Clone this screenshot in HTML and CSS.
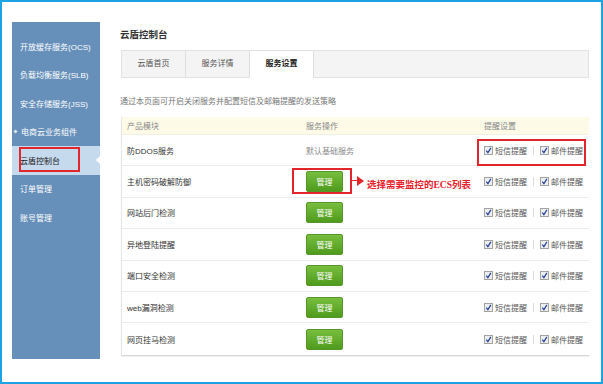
FILE: index.html
```html
<!DOCTYPE html>
<html lang="zh-CN">
<head>
<meta charset="utf-8">
<title>云盾控制台</title>
<link rel="stylesheet" href="styles.css">
</head>
<body>
<div class="frame">
  <aside class="side">
    <div class="side-list">
      <div class="side-item">开放缓存服务(OCS)</div>
      <div class="side-item">负载均衡服务(SLB)</div>
      <div class="side-item">安全存储服务(JSS)</div>
      <div class="side-item"><span class="bullet"></span>电商云业务组件</div>
      <div class="side-item active">云盾控制台<span class="mark side-mark"></span><span class="pointer"></span></div>
      <div class="side-item">订单管理</div>
      <div class="side-item">账号管理</div>
    </div>
  </aside>
  <main class="main">
    <div class="title">云盾控制台</div>
    <div class="tabs">
      <div class="tab">云盾首页</div>
      <div class="tab">服务详情</div>
      <div class="tab active">服务设置</div>
    </div>
    <p class="desc">通过本页面可开启关闭服务并配置短信及邮箱提醒的发送策略</p>
    <div class="table">
      <div class="row head">
        <div class="cell">产品模块</div>
        <div class="cell">服务操作</div>
        <div class="cell">提醒设置</div>
      </div>
      <div class="row">
        <div class="cell name">防DDOS服务</div>
        <div class="cell muted">默认基础服务</div>
        <div class="cell checks">
          <span class="cb"><svg viewBox="0 0 9 9" width="9" height="9"><rect x="0.5" y="0.5" width="8" height="8" fill="#eceef2" stroke="#a3a3a3"/><path d="M2.3 4.6 L3.9 6.6 L6.9 1.9" fill="none" stroke="#27409a" stroke-width="1.2"/></svg></span><span>短信提醒</span><span class="sep"></span><span class="cb"><svg viewBox="0 0 9 9" width="9" height="9"><rect x="0.5" y="0.5" width="8" height="8" fill="#eceef2" stroke="#a3a3a3"/><path d="M2.3 4.6 L3.9 6.6 L6.9 1.9" fill="none" stroke="#27409a" stroke-width="1.2"/></svg></span><span>邮件提醒</span>
          <span class="mark check-mark"></span>
        </div>
      </div>
      <div class="row">
        <div class="cell name">主机密码破解防御</div>
        <div class="cell op">
          <span class="btn">管理</span>
          <span class="mark btn-mark"></span>
          <span class="arrow-line"></span><span class="arrow-head"></span>
          <span class="note">选择需要监控的ECS列表</span>
        </div>
        <div class="cell checks">
          <span class="cb"><svg viewBox="0 0 9 9" width="9" height="9"><rect x="0.5" y="0.5" width="8" height="8" fill="#eceef2" stroke="#a3a3a3"/><path d="M2.3 4.6 L3.9 6.6 L6.9 1.9" fill="none" stroke="#27409a" stroke-width="1.2"/></svg></span><span>短信提醒</span><span class="sep"></span><span class="cb"><svg viewBox="0 0 9 9" width="9" height="9"><rect x="0.5" y="0.5" width="8" height="8" fill="#eceef2" stroke="#a3a3a3"/><path d="M2.3 4.6 L3.9 6.6 L6.9 1.9" fill="none" stroke="#27409a" stroke-width="1.2"/></svg></span><span>邮件提醒</span>
        </div>
      </div>
      <div class="row">
        <div class="cell name">网站后门检测</div>
        <div class="cell op"><span class="btn">管理</span></div>
        <div class="cell checks">
          <span class="cb"><svg viewBox="0 0 9 9" width="9" height="9"><rect x="0.5" y="0.5" width="8" height="8" fill="#eceef2" stroke="#a3a3a3"/><path d="M2.3 4.6 L3.9 6.6 L6.9 1.9" fill="none" stroke="#27409a" stroke-width="1.2"/></svg></span><span>短信提醒</span><span class="sep"></span><span class="cb"><svg viewBox="0 0 9 9" width="9" height="9"><rect x="0.5" y="0.5" width="8" height="8" fill="#eceef2" stroke="#a3a3a3"/><path d="M2.3 4.6 L3.9 6.6 L6.9 1.9" fill="none" stroke="#27409a" stroke-width="1.2"/></svg></span><span>邮件提醒</span>
        </div>
      </div>
      <div class="row">
        <div class="cell name">异地登陆提醒</div>
        <div class="cell op"><span class="btn">管理</span></div>
        <div class="cell checks">
          <span class="cb"><svg viewBox="0 0 9 9" width="9" height="9"><rect x="0.5" y="0.5" width="8" height="8" fill="#eceef2" stroke="#a3a3a3"/><path d="M2.3 4.6 L3.9 6.6 L6.9 1.9" fill="none" stroke="#27409a" stroke-width="1.2"/></svg></span><span>短信提醒</span><span class="sep"></span><span class="cb"><svg viewBox="0 0 9 9" width="9" height="9"><rect x="0.5" y="0.5" width="8" height="8" fill="#eceef2" stroke="#a3a3a3"/><path d="M2.3 4.6 L3.9 6.6 L6.9 1.9" fill="none" stroke="#27409a" stroke-width="1.2"/></svg></span><span>邮件提醒</span>
        </div>
      </div>
      <div class="row">
        <div class="cell name">端口安全检测</div>
        <div class="cell op"><span class="btn">管理</span></div>
        <div class="cell checks">
          <span class="cb"><svg viewBox="0 0 9 9" width="9" height="9"><rect x="0.5" y="0.5" width="8" height="8" fill="#eceef2" stroke="#a3a3a3"/><path d="M2.3 4.6 L3.9 6.6 L6.9 1.9" fill="none" stroke="#27409a" stroke-width="1.2"/></svg></span><span>短信提醒</span><span class="sep"></span><span class="cb"><svg viewBox="0 0 9 9" width="9" height="9"><rect x="0.5" y="0.5" width="8" height="8" fill="#eceef2" stroke="#a3a3a3"/><path d="M2.3 4.6 L3.9 6.6 L6.9 1.9" fill="none" stroke="#27409a" stroke-width="1.2"/></svg></span><span>邮件提醒</span>
        </div>
      </div>
      <div class="row">
        <div class="cell name">web漏洞检测</div>
        <div class="cell op"><span class="btn">管理</span></div>
        <div class="cell checks">
          <span class="cb"><svg viewBox="0 0 9 9" width="9" height="9"><rect x="0.5" y="0.5" width="8" height="8" fill="#eceef2" stroke="#a3a3a3"/><path d="M2.3 4.6 L3.9 6.6 L6.9 1.9" fill="none" stroke="#27409a" stroke-width="1.2"/></svg></span><span>短信提醒</span><span class="sep"></span><span class="cb"><svg viewBox="0 0 9 9" width="9" height="9"><rect x="0.5" y="0.5" width="8" height="8" fill="#eceef2" stroke="#a3a3a3"/><path d="M2.3 4.6 L3.9 6.6 L6.9 1.9" fill="none" stroke="#27409a" stroke-width="1.2"/></svg></span><span>邮件提醒</span>
        </div>
      </div>
      <div class="row">
        <div class="cell name">网页挂马检测</div>
        <div class="cell op"><span class="btn">管理</span></div>
        <div class="cell checks">
          <span class="cb"><svg viewBox="0 0 9 9" width="9" height="9"><rect x="0.5" y="0.5" width="8" height="8" fill="#eceef2" stroke="#a3a3a3"/><path d="M2.3 4.6 L3.9 6.6 L6.9 1.9" fill="none" stroke="#27409a" stroke-width="1.2"/></svg></span><span>短信提醒</span><span class="sep"></span><span class="cb"><svg viewBox="0 0 9 9" width="9" height="9"><rect x="0.5" y="0.5" width="8" height="8" fill="#eceef2" stroke="#a3a3a3"/><path d="M2.3 4.6 L3.9 6.6 L6.9 1.9" fill="none" stroke="#27409a" stroke-width="1.2"/></svg></span><span>邮件提醒</span>
        </div>
      </div>
    </div>
  </main>
</div>
</body>
</html>
```

FILE: styles.css
```css
html, body {
  margin: 0;
  padding: 0;
  background: #fff;
}
body {
  font-family: "Liberation Sans", "Noto Sans CJK SC", sans-serif;
  font-size: 8px;
  color: #333;
}
.frame {
  width: 603px;
  height: 384px;
  box-sizing: border-box;
  border: 2px solid #1ba3e3;
  display: flex;
  align-items: flex-start;
  padding: 20px 12px 0 10px;
  gap: 20px;
}
.side {
  width: 88px;
  height: 337px;
  flex: none;
  background: #6690ba;
  overflow: hidden;
}
.side-list {
  padding-top: 10px;
}
.side-item {
  position: relative;
  height: 28.5px;
  display: flex;
  align-items: center;
  padding-left: 8px;
  color: #fff;
  font-size: 8px;
  white-space: nowrap;
}
.bullet {
  width: 3px;
  height: 3px;
  background: #d9e4f0;
  transform: rotate(45deg);
  margin-left: -6px;
  margin-right: 4px;
}
.side-item.active {
  background: #c6daee;
  color: #222;
}
.mark {
  position: absolute;
  border: 2px solid #e3262c;
  box-sizing: border-box;
}
.side-mark {
  left: 7px;
  top: 1px;
  width: 61px;
  height: 25px;
}
.pointer {
  position: absolute;
  right: 0;
  top: 10px;
  width: 0;
  height: 0;
  border-top: 4px solid transparent;
  border-bottom: 4px solid transparent;
  border-right: 4px solid #fff;
}
.main {
  flex: 1;
  display: flex;
  flex-direction: column;
}
.title {
  margin-top: 7px;
  line-height: 12px;
  font-size: 9.5px;
  font-weight: bold;
  color: #333;
}
.tabs {
  margin: 9px 0 0 1px;
  height: 28px;
  box-sizing: border-box;
  display: flex;
  background: #f4f4f4;
  border: 1px solid #e2e2e2;
}
.tab {
  width: 63px;
  line-height: 26px;
  text-align: center;
  border-right: 1px solid #dedede;
  color: #555;
}
.tab.active {
  background: #fff;
  height: 27px;
  margin-bottom: -1px;
  color: #222;
  font-weight: bold;
}
.desc {
  margin: 18px 0 0;
  line-height: 12px;
  color: #777;
}
.table {
  margin: 9px 0 0 1px;
  border-left: 1px solid #e6e6e6;
  border-bottom: 1px solid #d6d6d6;
  box-shadow: 0 1px 1px rgba(0, 0, 0, 0.05);
}
.row {
  display: grid;
  grid-template-columns: 178px 178px 1fr;
  height: 31.4px;
  box-sizing: border-box;
  border-bottom: 1px solid #ececec;
}
.row:last-child {
  border-bottom: none;
}
.row.head {
  height: 18px;
  background: #fdfbe8;
  border-bottom: 1px solid #f3f1e2;
  color: #888;
}
.cell {
  position: relative;
  display: flex;
  align-items: center;
  padding-left: 6px;
  white-space: nowrap;
}
.cell:first-child {
  padding-left: 5px;
}
.name {
  color: #333;
}
.muted {
  color: #8a8a8a;
}
.btn {
  width: 37px;
  height: 21px;
  box-sizing: border-box;
  display: flex;
  align-items: center;
  justify-content: center;
  color: #fff;
  border: 1px solid #57962a;
  border-radius: 2px;
  background: linear-gradient(#78be3e, #4f9b1d);
}
.btn-mark {
  left: -8px;
  top: 2px;
  width: 60px;
  height: 26px;
}
.arrow-line {
  position: absolute;
  left: 52px;
  top: 14px;
  width: 6px;
  height: 1px;
  background: #e3262c;
}
.arrow-head {
  position: absolute;
  left: 57px;
  top: 10px;
  width: 0;
  height: 0;
  border-top: 5px solid transparent;
  border-bottom: 5px solid transparent;
  border-left: 7px solid #e3262c;
}
.note {
  position: absolute;
  left: 67px;
  top: 13px;
  line-height: 12px;
  font-size: 9.5px;
  font-weight: bold;
  color: #e8202a;
  font-family: "Liberation Serif", "Noto Sans CJK SC", serif;
}
.checks {
  color: #555;
}
.cb {
  display: flex;
  width: 9px;
  height: 9px;
  margin-right: 2px;
}
.sep {
  width: 1px;
  height: 9px;
  background: #dcdcdc;
  margin: 0 6px;
}
.check-mark {
  left: -1px;
  top: 4px;
  width: 109px;
  height: 27px;
}
```
